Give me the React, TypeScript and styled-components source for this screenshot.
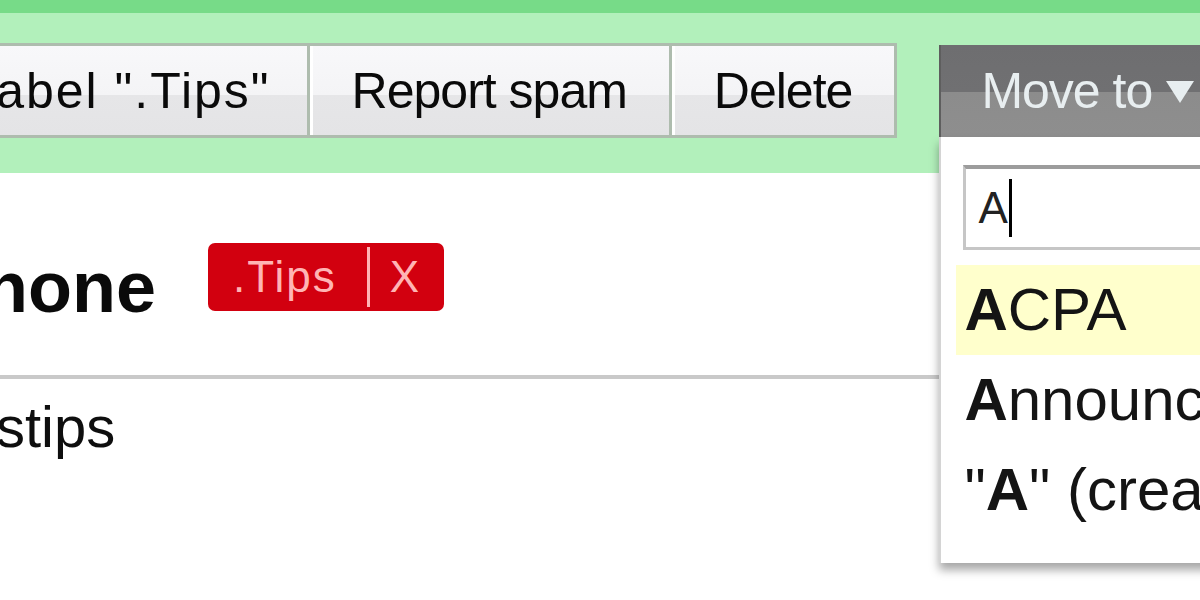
import React from 'react';
import styled, {createGlobalStyle} from 'styled-components';

const GlobalStyle = createGlobalStyle`
  html, body {
    margin: 0;
    padding: 0;
    background: #ffffff;
  }
  body {
    font-family: "Liberation Sans", Arial, sans-serif;
    color: #111111;
  }
`;

const Page = styled.div`
  position: relative;
  width: 1200px;
  height: 600px;
  overflow: hidden;
  background: #ffffff;
`;

const TopStripe = styled.div`
  height: 13px;
  background: #77db88;
`;

const Toolbar = styled.div`
  position: relative;
  z-index: 2;
  display: flex;
  align-items: flex-start;
  box-sizing: border-box;
  height: 160px;
  padding-top: 30px;
  background: #b2f0bb;
`;

const ButtonGroup = styled.div`
  display: flex;
  margin-left: -276px;
`;

const ToolButton = styled.div<{$spacing?: number; $first?: boolean}>`
  box-sizing: border-box;
  height: 95px;
  display: flex;
  align-items: center;
  padding: 0 ${p => (p.$first ? 36 : 42)}px 0 42px;
  border: 3px solid #aebcae;
  border-left: ${p => (p.$first ? '3px solid #aebcae' : 'none')};
  box-shadow: inset 3px 0 0 #ffffff;
  background: linear-gradient(#f8f8fa 0%, #f4f4f6 55%, #e6e6e8 55%, #e4e4e6 100%);
  font-size: 50px;
  letter-spacing: ${p => p.$spacing ?? -1}px;
  white-space: nowrap;
  color: #0a0a0a;
`;

const MoveWrap = styled.div`
  position: relative;
  margin-left: 42px;
  margin-top: 2px;
`;

const MoveButton = styled.div`
  box-sizing: border-box;
  width: 320px;
  height: 92px;
  display: flex;
  align-items: center;
  gap: 14px;
  padding-left: 40px;
  border-left: 2px solid #5e5e5e;
  background: linear-gradient(#6e6e70 0%, #707072 51%, #8c8c8c 51%, #8e8e8e 100%);
  color: #e8eef0;
  font-size: 50px;
  letter-spacing: -1px;
  white-space: nowrap;
`;

const Menu = styled.div`
  position: absolute;
  top: 100%;
  left: 0;
  box-sizing: border-box;
  width: 320px;
  height: 426px;
  padding: 28px 0 0 15px;
  background: #ffffff;
  border-left: 2px solid #d4d4d4;
  box-shadow: 0 7px 9px rgba(0, 0, 0, 0.35);
`;

const SearchBox = styled.div`
  box-sizing: border-box;
  height: 85px;
  display: flex;
  align-items: center;
  margin-left: 7px;
  padding-left: 12px;
  border: 3px solid #c6c6c6;
  border-top: 4px solid #9c9c9c;
  font-size: 44px;
  color: #222222;
`;

const Caret = styled.span`
  display: inline-block;
  width: 3px;
  height: 58px;
  margin-left: 1px;
  background: #000000;
`;

const MenuList = styled.div`
  margin-top: 15px;
`;

const MenuItem = styled.div<{$active?: boolean}>`
  height: 90px;
  line-height: 90px;
  padding-left: 8px;
  font-size: 60px;
  white-space: nowrap;
  color: #141414;
  background: ${p => (p.$active ? '#ffffcc' : 'transparent')};
  b {
    font-weight: bold;
  }
`;

const Content = styled.div`
  padding-top: 70px;
`;

const TitleRow = styled.div`
  display: flex;
  align-items: flex-start;
  gap: 52px;
  height: 68px;
`;

const Title = styled.div`
  margin-top: 10px;
  margin-left: -16px;
  font-size: 72px;
  line-height: 68px;
  font-weight: bold;
  color: #0a0a0a;
`;

const LabelChip = styled.div`
  box-sizing: border-box;
  height: 68px;
  display: flex;
  align-items: center;
  padding: 0 23px 0 25px;
  border-radius: 7px;
  background: #d2000f;
  color: #ffb4b4;
  font-size: 44px;
  letter-spacing: 2px;
`;

const ChipSep = styled.span`
  width: 3px;
  height: 60px;
  margin: 0 20px 0 30px;
  background: #ffb4b4;
`;

const Rule = styled.div`
  height: 4px;
  margin-top: 64px;
  background: #c9c9c9;
`;

const Snippet = styled.div`
  margin-top: 19px;
  margin-left: -4px;
  font-size: 58px;
  line-height: 58px;
  color: #0e0e0e;
`;

const Triangle = () => (
  <svg width="28" height="24" viewBox="0 0 28 24">
    <polygon points="0,2 28,2 14,24" fill="#e8eef0" />
  </svg>
);

export default function App() {
  return (
    <>
      <GlobalStyle />
      <Page>
        <TopStripe />
        <Toolbar>
          <ButtonGroup>
            <ToolButton $first $spacing={2}>Remove label ".Tips"</ToolButton>
            <ToolButton>Report spam</ToolButton>
            <ToolButton>Delete</ToolButton>
          </ButtonGroup>
          <MoveWrap>
            <MoveButton>
              Move to <Triangle />
            </MoveButton>
            <Menu>
              <SearchBox>
                A<Caret />
              </SearchBox>
              <MenuList>
                <MenuItem $active><b>A</b>CPA</MenuItem>
                <MenuItem><b>A</b>nnouncements</MenuItem>
                <MenuItem>"<b>A</b>" (create new)</MenuItem>
              </MenuList>
            </Menu>
          </MoveWrap>
        </Toolbar>
        <Content>
          <TitleRow>
            <Title>hone</Title>
            <LabelChip>
              .Tips
              <ChipSep />
              X
            </LabelChip>
          </TitleRow>
          <Rule />
          <Snippet>stips</Snippet>
        </Content>
      </Page>
    </>
  );
}
